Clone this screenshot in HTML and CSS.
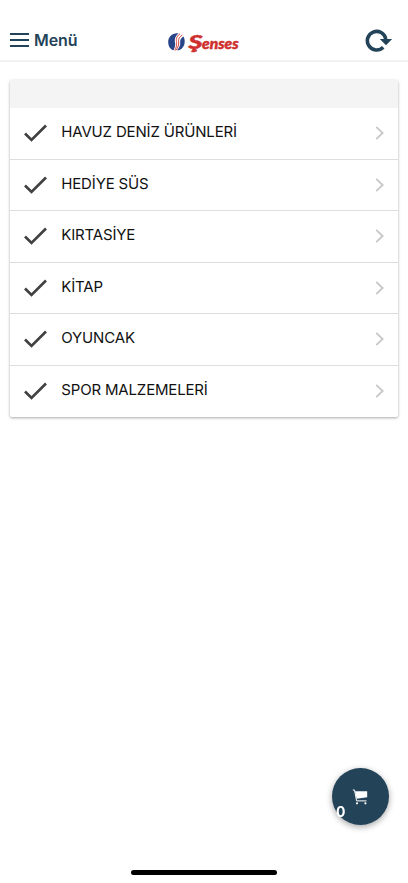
FILE: index.html
```
<!DOCTYPE html>
<html lang="tr">
<head>
<meta charset="utf-8">
<meta name="viewport" content="width=device-width, initial-scale=1">
<title>Şenses</title>
<link rel="stylesheet" href="styles.css">
</head>
<body>
<svg class="defs" aria-hidden="true">
  <symbol id="check" viewBox="0 0 24 18"><path d="M1 9.500 7.500 15.900 22 1.500" fill="none" stroke="#414141" stroke-width="2.700"/></symbol>
  <symbol id="chevron" viewBox="0 0 9 14"><path d="M1.200 .9 7.600 7 1.200 13.100" fill="none" stroke="#c8c8c8" stroke-width="1.900"/></symbol>
</svg>
<header class="bar">
  <div class="menu">
    <svg class="burger" viewBox="0 0 19 14"><path d="M0 1h19M0 7h19M0 13h19" stroke="#234359" stroke-width="2"/></svg>
    <span>Menü</span>
  </div>
  <svg class="logo" viewBox="0 0 74 26">
    <path d="M11.500 4.500C6 3.500 1.200 7.500 1.200 13C1.200 17.500 3.500 20.500 6.500 21.300C8 18 8.500 16 8 13.500C7.500 10.500 8 7 11.500 4.500Z" fill="#28458a"/>
    <path d="M16.500 7.500C18.300 11 18.200 15.500 15.500 18.800C13.800 20.800 11.800 21.400 10 21.300C12.500 18.500 13.500 16 13.200 13.500C12.900 11 13.800 9 16.500 7.500Z" fill="#28458a"/>
    <path d="M13 4.800C8.500 8 9.300 11 9.600 13.500C9.900 16.500 9 19 7.800 21.300M15.300 6C10.800 9 11.600 11.500 11.700 14C11.800 16.500 10.500 19.500 8.800 21.300" fill="none" stroke="#d4453f" stroke-width="1"/>
    <text class="brand" x="21.500" y="19.500" textLength="14" lengthAdjust="spacingAndGlyphs" font-size="19">Ş</text>
    <text class="brand" x="35" y="19.500" textLength="36.500" lengthAdjust="spacingAndGlyphs" font-size="15">enses</text>
  </svg>
  <svg class="reload" viewBox="0 0 28 24"><path d="M18.200 19.300A9.300 9.300 0 1 1 20.800 11" fill="none" stroke="#234359" stroke-width="3.600"/><path d="M14.800 11H27.200L21 17.300Z" fill="#234359"/></svg>
</header>
<main class="card">
  <div class="card-head"></div>
  <ul class="list">
    <li><svg class="check"><use href="#check"/></svg><span class="label">HAVUZ DENİZ ÜRÜNLERİ</span><svg class="chevron"><use href="#chevron"/></svg></li>
    <li><svg class="check"><use href="#check"/></svg><span class="label">HEDİYE SÜS</span><svg class="chevron"><use href="#chevron"/></svg></li>
    <li><svg class="check"><use href="#check"/></svg><span class="label">KIRTASİYE</span><svg class="chevron"><use href="#chevron"/></svg></li>
    <li><svg class="check"><use href="#check"/></svg><span class="label">KİTAP</span><svg class="chevron"><use href="#chevron"/></svg></li>
    <li><svg class="check"><use href="#check"/></svg><span class="label">OYUNCAK</span><svg class="chevron"><use href="#chevron"/></svg></li>
    <li><svg class="check"><use href="#check"/></svg><span class="label">SPOR MALZEMELERİ</span><svg class="chevron"><use href="#chevron"/></svg></li>
  </ul>
</main>
<button class="cart">
  <svg class="cart-icon" viewBox="0 0 16 16"><path d="M3 2.300H15.200V8.300L4.600 9.700Z" fill="#fff"/><path d="M.8 1H2.500L4.600 11.900H14.500" fill="none" stroke="#fff" stroke-width="1"/><circle cx="5" cy="14.300" r="1.100" fill="#fff"/><circle cx="13.400" cy="14.300" r="1.100" fill="#fff"/></svg>
  <span class="count">0</span>
</button>
<div class="home"></div>
</body>
</html>
```
FILE: styles.css
```
* { box-sizing: border-box; }
body {
  margin: 0;
  height: 883px;
  background: #fff;
  font-family: Inter, "Liberation Sans", sans-serif;
  overflow: hidden;
}
svg { display: block; flex: none; }
.defs { position: absolute; width: 0; height: 0; }
.bar {
  height: 62px;
  padding: 20px 15px 0 10px;
  border-bottom: 2px solid #f1f1f1;
  display: grid;
  grid-template-columns: 157px 74px 1fr;
  align-items: center;
}
.menu {
  display: flex;
  align-items: center;
  gap: 5px;
  color: #234359;
  font-size: 16px;
  font-weight: 600;
  line-height: 20px;
  letter-spacing: -.1px;
}
.burger { width: 19px; height: 14px; }
.logo { width: 74px; height: 26px; margin-top: 4px; overflow: visible; }
.brand {
  font-family: Lato, sans-serif;
  font-weight: 900;
  font-style: italic;
  fill: #cf302e;
  stroke: #cf302e;
  stroke-width: .5px;
}
.reload { width: 28px; height: 24px; justify-self: end; }
.card {
  margin: 18px 10px 0;
  height: 337px;
  border-radius: 2px;
  background: #fff;
  box-shadow: 0 1px 3px rgba(0, 0, 0, .34);
  overflow: hidden;
}
.card-head { height: 28px; background: #f4f4f4; }
.list { margin: 0; padding: 0; list-style: none; }
.list li {
  height: 51.500px;
  padding: 0 14px;
  display: flex;
  align-items: center;
  border-bottom: 1px solid #dedede;
}
.list li:last-child { border-bottom: 0; height: 50.500px; }
.check { width: 24px; height: 18px; }
.label {
  flex: 1;
  margin: -2px 0 0 13.300px;
  color: #111;
  font-size: 15px;
  line-height: 20px;
  letter-spacing: -.17px;
  white-space: nowrap;
}
.chevron { width: 9px; height: 14px; }
.cart {
  position: fixed;
  left: 331.500px;
  top: 768px;
  width: 57px;
  height: 57px;
  padding: 0;
  border: 0;
  border-radius: 50%;
  background: #234359;
  box-shadow: 0 2px 6px rgba(0, 0, 0, .35);
  display: grid;
  place-items: center;
}
.cart-icon { width: 16px; height: 16px; }
.count {
  position: absolute;
  left: 4.500px;
  top: 35px;
  color: #fff;
  font: 700 14px/18px Inter, sans-serif;
}
.home {
  position: fixed;
  left: 131px;
  top: 870px;
  width: 146px;
  height: 5px;
  border-radius: 3px;
  background: #000;
}
```
